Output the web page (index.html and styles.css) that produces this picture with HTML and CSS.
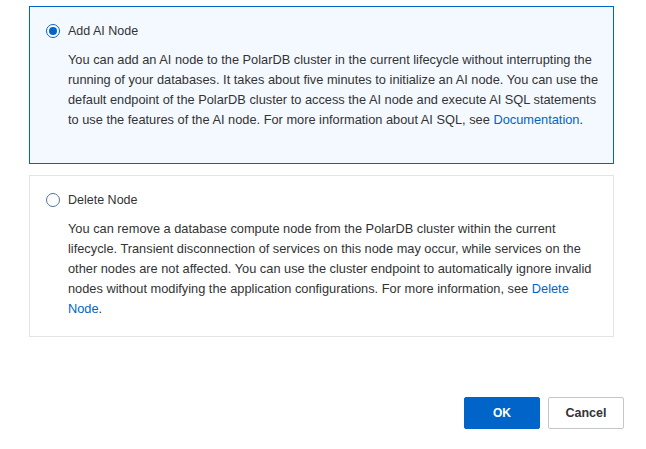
FILE: index.html
```html
<!DOCTYPE html>
<html lang="en">
<head>
    <meta charset="UTF-8">
    <meta name="viewport" content="width=device-width, initial-scale=1.0">
    <title>Change Nodes</title>
    <link rel="stylesheet" href="styles.css">
</head>
<body>
    <div class="options">
        <label class="option selected">
            <div class="option-head">
                <span class="radio checked"></span>
                <span class="option-title">Add AI Node</span>
            </div>
            <p class="option-desc">You can add an AI node to the PolarDB cluster in the current lifecycle without interrupting the running of your databases. It takes about five minutes to initialize an AI node. You can use the default endpoint of the PolarDB cluster to access the AI node and execute AI SQL statements to use the features of the AI node. For more information about AI SQL, see <a href="#">Documentation</a>.</p>
        </label>

        <label class="option">
            <div class="option-head">
                <span class="radio"></span>
                <span class="option-title">Delete Node</span>
            </div>
            <p class="option-desc">You can remove a database compute node from the PolarDB cluster within the current lifecycle. Transient disconnection of services on this node may occur, while services on the other nodes are not affected. You can use the cluster endpoint to automatically ignore invalid nodes without modifying the application configurations. For more information, see <a href="#">Delete Node</a>.</p>
        </label>
    </div>

    <div class="footer">
        <button class="btn btn-primary">OK</button>
        <button class="btn">Cancel</button>
    </div>
</body>
</html>
```

FILE: styles.css
```css
body {
    margin: 0;
    padding: 6px 22px 0 29px;
    font-family: "Liberation Sans", Arial, sans-serif;
    color: #333;
    background-color: #fff;
}
.options {
    display: flex;
    flex-direction: column;
    gap: 11px;
    margin-right: 10px;
}
.option {
    display: block;
    box-sizing: border-box;
    min-height: 158px;
    border: 1px solid #e3e4e6;
    background-color: #fff;
    padding: 16px 8px 17px 16px;
    cursor: pointer;
}
.option.selected {
    border-color: #0064c8;
    background-color: #f4f9ff;
}
.option-head {
    display: flex;
    align-items: center;
    gap: 8px;
    height: 16px;
}
.radio {
    width: 14px;
    height: 14px;
    box-sizing: border-box;
    border: 1px solid #52729c;
    border-radius: 50%;
    background-color: #fff;
    position: relative;
}
.radio.checked {
    border-color: #0064c8;
}
.radio.checked::after {
    content: "";
    position: absolute;
    top: 2px;
    left: 2px;
    width: 8px;
    height: 8px;
    border-radius: 50%;
    background-color: #0064c8;
}
.option-title {
    font-size: 12.5px;
    color: #333;
}
.option-desc {
    margin: 11px 0 0 22px;
    font-size: 12.8px;
    line-height: 20px;
    color: #333;
}
.option-desc a {
    color: #0064c8;
    text-decoration: none;
}
.footer {
    display: flex;
    justify-content: flex-end;
    gap: 8px;
    margin-top: 60px;
}
.btn {
    width: 76px;
    height: 32px;
    font-family: "Liberation Sans", Arial, sans-serif;
    font-size: 12.5px;
    font-weight: 700;
    color: #333;
    background-color: #fff;
    border: 1px solid #c4c6cc;
    border-radius: 2px;
    cursor: pointer;
}
.btn-primary {
    background-color: #0064c8;
    border-color: #0064c8;
    color: #fff;
    font-size: 12px;
}
```
